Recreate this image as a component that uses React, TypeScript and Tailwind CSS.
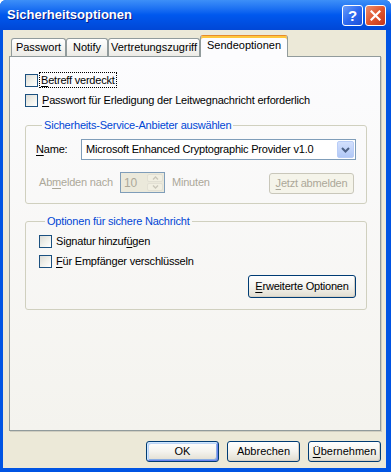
import React from 'react';

const U = ({ children }: { children: React.ReactNode }) => (
  <span className="underline underline-offset-[2px] decoration-[1px]">{children}</span>
);

const CheckBox = () => (
  <span className="block w-[13px] h-[13px] shrink-0 border border-[#1c5180] bg-linear-to-br from-[#dcdcd7] via-[#f0f0ea] to-white" />
);

interface BtnProps {
  children: React.ReactNode;
  className?: string;
  isDefault?: boolean;
  disabled?: boolean;
}

const XPButton: React.FC<BtnProps> = ({ children, className = '', isDefault, disabled }) => {
  if (disabled) {
    return (
      <button className={`flex items-center justify-center rounded-[3px] border border-[#c9c7ba] bg-[#f5f4ea] text-[11px] text-[#aca899] ${className}`}>
        {children}
      </button>
    );
  }
  return (
    <button
      className={`flex items-center justify-center rounded-[3px] border border-[#003c74] bg-linear-to-b from-white via-[#f4f3ee] to-[#e1ddd0] text-[11px] text-black ${
        isDefault
          ? 'shadow-[inset_1px_1px_0_#cee7ff,inset_-1px_-1px_0_#6982ee,inset_2px_2px_0_#bcd4f6,inset_-2px_-2px_0_#89ade4]'
          : 'shadow-[inset_-1px_-1px_0_#d6d0c5]'
      } ${className}`}
    >
      {children}
    </button>
  );
};

const Tab = ({ label, width }: { label: string; width: string }) => (
  <div
    className={`${width} h-[18px] flex items-center justify-center rounded-t-[3px] border-t border-x border-[#919b9c] bg-linear-to-b from-white to-[#ecebe6] text-[11px]`}
  >
    {label}
  </div>
);

export default function App() {
  return (
    <div className="w-[391px] h-[472px] flex flex-col bg-[#0054e3] font-['Liberation_Sans',Arial,sans-serif] text-black select-none overflow-hidden rounded-t-[6px]">
      {/* title bar */}
      <div className="h-[30px] shrink-0 flex items-center pl-[7px] pr-[5px] bg-linear-to-b from-[#3d8ff8] via-[#0058ee] to-[#0047d6]">
        <span className="flex-1 text-[13px] font-bold text-white [text-shadow:1px_1px_0_#0a1883]">
          Sicherheitsoptionen
        </span>
        <div className="flex gap-[2px]">
          <div className="w-[21px] h-[21px] rounded-[3px] border border-white bg-linear-to-br from-[#6a9cf8] via-[#2e6af0] to-[#1c50d8] flex items-center justify-center text-white font-bold text-[15px] leading-none">
            ?
          </div>
          <div className="w-[21px] h-[21px] rounded-[3px] border border-white bg-linear-to-br from-[#eb8d6e] via-[#e0562e] to-[#c2341a] flex items-center justify-center">
            <svg width="11" height="11" viewBox="0 0 11 11">
              <path d="M1.5 1.5 L9.5 9.5 M9.5 1.5 L1.5 9.5" stroke="white" strokeWidth="2.2" strokeLinecap="square" />
            </svg>
          </div>
        </div>
      </div>

      {/* client area */}
      <div className="flex-1 ml-[3px] mr-[5px] mb-[4px] bg-[#ece9d8] flex flex-col pl-[6px] pr-[5px] pt-[5px]">
        {/* tabs */}
        <div className="relative z-10 h-[21px] flex items-end pl-[2px]">
          <Tab label="Passwort" width="w-[55px]" />
          <Tab label="Notify" width="w-[42px]" />
          <Tab label="Vertretungszugriff" width="w-[92px]" />
          <div className="w-[88px] h-[22px] mb-[-1px] flex items-center justify-center rounded-t-[3px] border-t border-x border-t-[#e68b2c] border-x-[#919b9c] bg-[#fcfcfe] shadow-[inset_0_2px_0_#ffc73c] text-[11px] pb-[2px]">
            Sendeoptionen
          </div>
        </div>

        {/* panel */}
        <div className="h-[375px] border border-[#919b9c] shadow-[1px_1px_0_#d0cec1] bg-linear-to-b from-[#fcfcfe] to-[#f4f3ee] flex flex-col pt-[15px] text-[11px] tracking-[-0.2px]">
          <div className="flex flex-col gap-[4px] pl-[15px]">
            <div className="h-[16px] flex items-center">
              <CheckBox />
              <span className="ml-[2px] px-[1px] outline-1 outline-dotted outline-black leading-[14px]">
                <U>B</U>etreff verdeckt
              </span>
            </div>
            <div className="h-[16px] flex items-center">
              <CheckBox />
              <span className="ml-[4px]">
                <U>P</U>asswort für Erledigung der Leitwegnachricht erforderlich
              </span>
            </div>
          </div>

          <fieldset className="mt-[11px] ml-[15px] mr-[13px] border border-[#d0d0bf] rounded-[3px] pl-[10px] pr-[10px] pt-[7px] pb-[9px]">
            <legend className="ml-[6px] px-[2px] text-[#0046d5] leading-[13px]">
              Sicherheits-Service-Anbieter auswählen
            </legend>
            <div className="flex items-center">
              <span className="w-[45px]">
                <U>N</U>ame:
              </span>
              <div className="w-[275px] h-[21px] flex items-center border border-[#7f9db9] bg-white">
                <span className="flex-1 pl-[4px]">Microsoft Enhanced Cryptographic Provider v1.0</span>
                <span className="w-[17px] h-[17px] mr-[1px] rounded-[2px] border border-[#b9cdf7] bg-linear-to-b from-[#d3e0fd] to-[#b1c8f6] flex items-center justify-center">
                  <svg width="9" height="6" viewBox="0 0 9 6">
                    <path d="M1 1 L4.5 4.5 L8 1" fill="none" stroke="#4d6185" strokeWidth="2" />
                  </svg>
                </span>
              </div>
            </div>
            <div className="flex items-center mt-[11px] text-[#aca899]">
              <span className="ml-[3px] w-[81px]">
                Ab<U>m</U>elden nach
              </span>
              <div className="w-[45px] h-[21px] flex items-center border border-[#7f9db9] bg-[#ebe9db]">
                <span className="flex-1 pl-[3px] text-[12px]">10</span>
                <span className="w-[16px] h-[17px] mr-[1px] flex flex-col gap-[1px]">
                  <span className="flex-1 rounded-[2px] bg-[#f1efe2] border border-[#e2e0d4] flex items-center justify-center">
                    <svg width="7" height="4" viewBox="0 0 7 4">
                      <path d="M1 3.5 L3.5 1 L6 3.5" fill="none" stroke="#c9c7ba" strokeWidth="1.4" />
                    </svg>
                  </span>
                  <span className="flex-1 rounded-[2px] bg-[#f1efe2] border border-[#e2e0d4] flex items-center justify-center">
                    <svg width="7" height="4" viewBox="0 0 7 4">
                      <path d="M1 0.5 L3.5 3 L6 0.5" fill="none" stroke="#c9c7ba" strokeWidth="1.4" />
                    </svg>
                  </span>
                </span>
              </div>
              <span className="ml-[7px]">Minuten</span>
              <XPButton disabled className="ml-auto mr-[2px] w-[85px] h-[21px] mt-[2px]">
                <span>
                  <U>J</U>etzt abmelden
                </span>
              </XPButton>
            </div>
          </fieldset>

          <fieldset className="mt-[11px] ml-[15px] mr-[13px] border border-[#d0d0bf] rounded-[3px] pl-[13px] pr-[10px] pt-[5px] pb-[11px]">
            <legend className="ml-[6px] px-[2px] text-[#0046d5] leading-[13px]">
              Optionen für sichere Nachricht
            </legend>
            <div className="flex flex-col gap-[4px]">
              <div className="h-[16px] flex items-center">
                <CheckBox />
                <span className="ml-[4px]">
                  Signatur hinzuf<U>ü</U>gen
                </span>
              </div>
              <div className="h-[16px] flex items-center">
                <CheckBox />
                <span className="ml-[4px]">
                  <U>F</U>ür Empfänger verschlüsseln
                </span>
              </div>
            </div>
            <div className="flex justify-end mt-[6px]">
              <XPButton className="w-[108px] h-[23px]">
                <span>
                  <U>E</U>rweiterte Optionen
                </span>
              </XPButton>
            </div>
          </fieldset>
        </div>

        {/* bottom buttons */}
        <div className="mt-[10px] flex justify-end gap-[8px]">
          <XPButton isDefault className="w-[73px] h-[21px]">
            OK
          </XPButton>
          <XPButton className="w-[73px] h-[21px]">Abbrechen</XPButton>
          <XPButton className="w-[73px] h-[21px]">
            <span>
              <U>Ü</U>bernehmen
            </span>
          </XPButton>
        </div>
      </div>
    </div>
  );
}
